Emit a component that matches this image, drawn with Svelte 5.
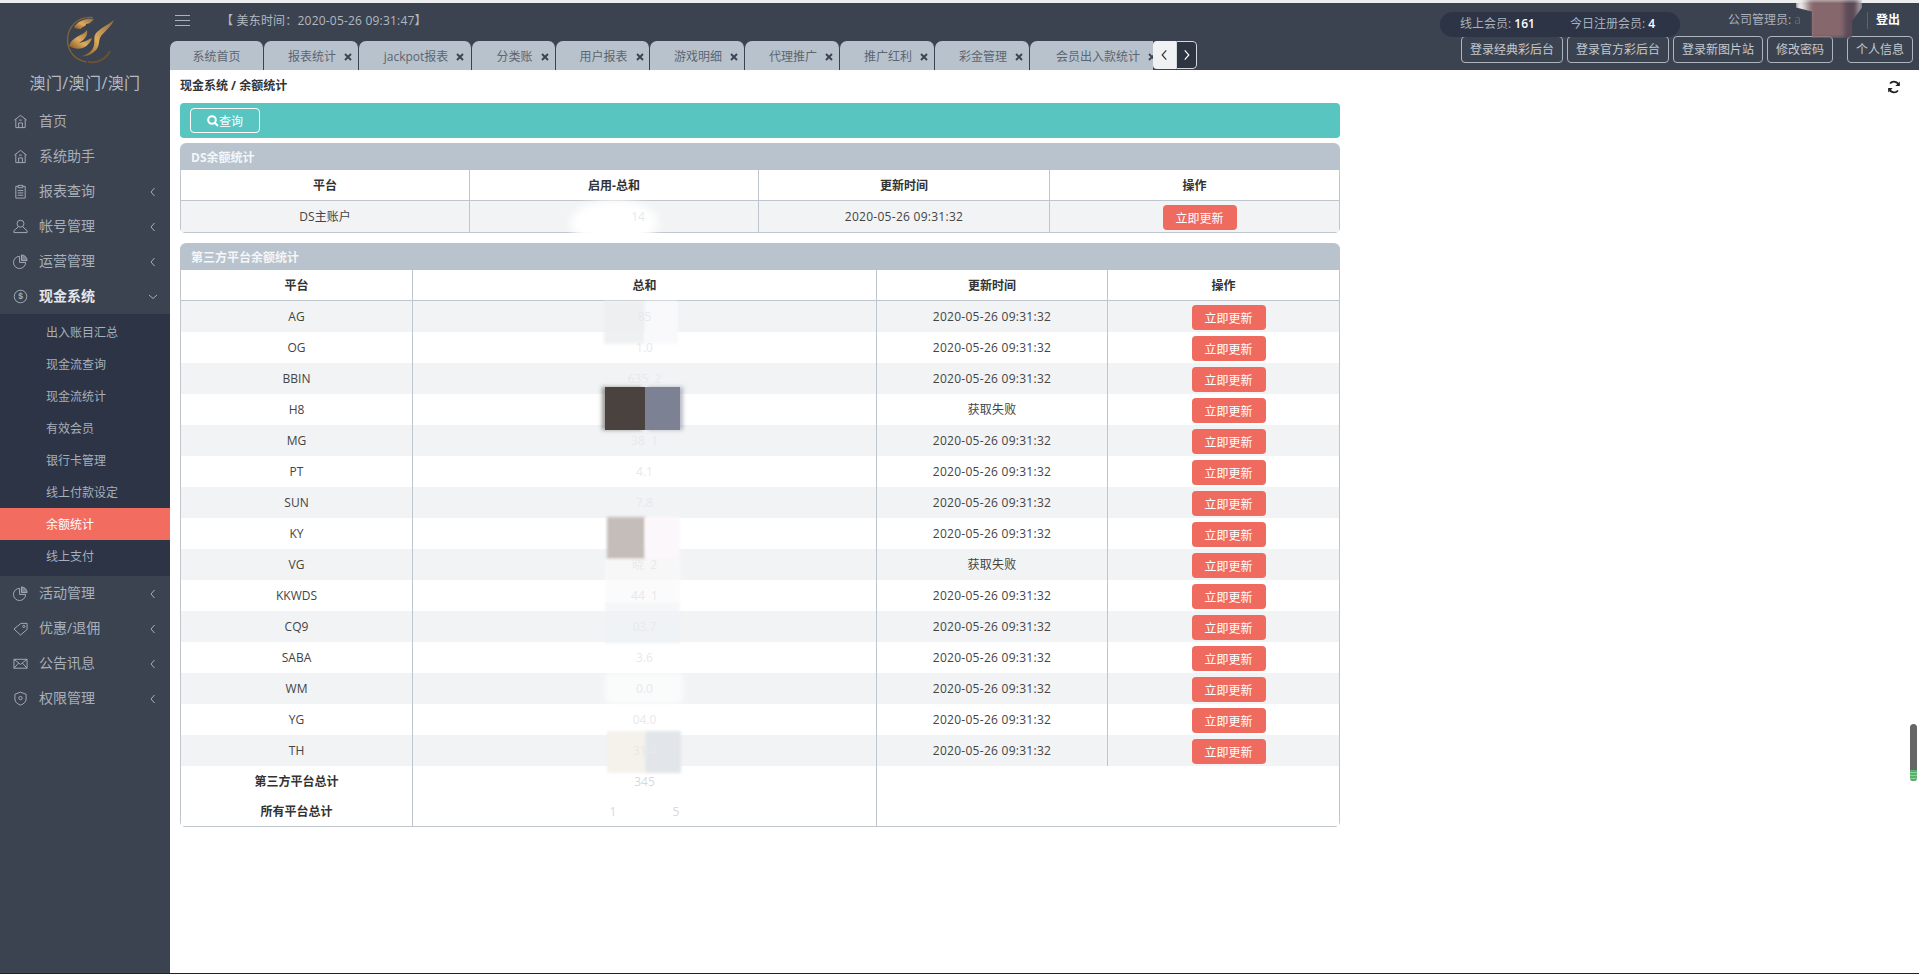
<script>
  const menuTop = [
    { t: '首页', i: 'home' },
    { t: '系统助手', i: 'home' },
    { t: '报表查询', i: 'clip', c: 1 },
    { t: '帐号管理', i: 'user', c: 1 },
    { t: '运营管理', i: 'pie', c: 1 }
  ];
  const sub = ['出入账目汇总', '现金流查询', '现金流统计', '有效会员', '银行卡管理', '线上付款设定', '余额统计', '线上支付'];
  const menuBottom = [
    { t: '活动管理', i: 'pie', c: 1 },
    { t: '优惠/退佣', i: 'tag', c: 1 },
    { t: '公告讯息', i: 'mail', c: 1 },
    { t: '权限管理', i: 'shield', c: 1 }
  ];
  const tabs = [
    { t: '系统首页', w: 94 }, { t: '报表统计', w: 95, x: 1 }, { t: 'jackpot报表', w: 113, x: 1 }, { t: '分类账', w: 84, x: 1 },
    { t: '用户报表', w: 94, x: 1 }, { t: '游戏明细', w: 95, x: 1 }, { t: '代理推广', w: 95, x: 1 }, { t: '推广红利', w: 95, x: 1 },
    { t: '彩金管理', w: 95, x: 1 }, { t: '会员出入款统计', w: 135, x: 1 }
  ];
  const T = '2020-05-26 09:31:32';
  const rows = [
    ['AG', '85', T], ['OG', '1.0', T], ['BBIN', '635  2', T], ['H8', '', '获取失败'], ['MG', '38  1', T],
    ['PT', '4.1', T], ['SUN', '7.8', T], ['KY', '', T], ['VG', '晓  2', '获取失败'], ['KKWDS', '44  1', T],
    ['CQ9', '03.7', T], ['SABA', '3.6', T], ['WM', '0.0', T], ['YG', '04.0', T], ['TH', '31.4', T]
  ];
  const links = ['登录经典彩后台', '登录官方彩后台', '登录新图片站', '修改密码'];
</script>

{#snippet icon(n)}
  <svg class="ico" viewBox="0 0 16 16" fill="none" stroke="currentColor" stroke-width="1">
    {#if n === 'home'}
      <path d="M1.5 6.5 8 1.5l6.500 5M3 5.500V14.500h10V5.500M6 14.500v-5h4v5M6.500 6.500h3" />
    {:else if n === 'clip'}
      <path d="M5.500 2.500H3v12.500h10V2.500h-2.500M5.500 1.500h5v2.500h-5zM5 7h6M5 9.500h6M5 12h6" />
    {:else if n === 'user'}
      <circle cx="8" cy="5" r="3.700" /><path d="M5.500 8.500 1 12.500v2h14v-2l-4.500-4" />
    {:else if n === 'pie'}
      <path d="M7 2.500a6.500 6.500 0 1 0 6.500 6.500H7z" /><path d="M9 1h.3A6 6 0 0 1 15 7H9z" fill="currentColor" fill-opacity=".55" />
    {:else if n === 'dollar'}
      <circle cx="8" cy="8" r="6.700" /><text x="8" y="11" text-anchor="middle" class="dl" fill="currentColor" stroke="none">$</text>
    {:else if n === 'tag'}
      <path d="M1 8.500 8.500 2.500H15v6.500L8 15z" /><circle cx="11.500" cy="5.800" r="1.200" />
    {:else if n === 'mail'}
      <path d="M1 3.500h14v9.500H1zM1 3.500l7 5.500 7-5.500M1 13l5-5.500M15 13l-5-5.500" />
    {:else}
      <path d="M8 1.200 14 3.500v5c0 3.500-3 5.500-6 6.500-3-1-6-3-6-6.500v-5z" /><circle cx="8" cy="7.500" r="1.800" />
    {/if}
  </svg>
{/snippet}

{#snippet left()}
  <svg class="chev" viewBox="0 0 6 10" fill="none" stroke="currentColor"><path d="M4.500 1 1 5l3.500 4" /></svg>
{/snippet}

{#snippet item(m)}
  <div class="mi">
    {@render icon(m.i)}
    <span class="mt">{m.t}</span>
    {#if m.c}{@render left()}{/if}
  </div>
{/snippet}

<div class="page">
  <div class="strip"></div>
  <div class="frame">
    <aside>
      <div class="brand">
        <svg class="logo" viewBox="0 0 50 48">
          <defs>
            <linearGradient id="g" x1="0" y1="1" x2="1" y2="0">
              <stop offset="0" stop-color="#7a5424" /><stop offset=".45" stop-color="#e0ab5d" /><stop offset="1" stop-color="#8d6a3d" />
            </linearGradient>
          </defs>
          <path d="M27 1.500C12 0 1 11 1.500 25c.5 11 8 19 19 21" fill="none" stroke="#8a6434" stroke-width="1.200" />
          <path d="M22 46c9 2 18-3 22-11" fill="none" stroke="#6d5230" stroke-width="1.800" />
          <path d="M8 11c5-7 13-9 20-8-2 2-4 5-8 5 0 3-4 2-5 5-3 0-5 0-7-2z" fill="url(#g)" />
          <path d="M3 30C6 20 17 20 21 14c1 6-2 9-8 13 6-1 8-3 13-5-2 7-11 15-23 8z" fill="url(#g)" />
          <path d="M16 40c6-2 11-5 12-11 1-5-1-9 3-13 5-5 11-7 17-12-3 7-9 11-13 16-3 5-1 10-5 14-4 4-9 7-14 6z" fill="url(#g)" />
        </svg>
        <div class="bname">澳门/澳门/澳门</div>
      </div>
      {#each menuTop as m}{@render item(m)}{/each}
      <div class="mi open">
        {@render icon('dollar')}
        <span class="mt">现金系统</span>
        <svg class="chev down" viewBox="0 0 10 6" fill="none" stroke="currentColor"><path d="m1 1 4 3.500L9 1" /></svg>
      </div>
      <div class="submenu">
        {#each sub as s}
          <div class="si" class:on={s === '余额统计'}>{s}</div>
        {/each}
      </div>
      {#each menuBottom as m}{@render item(m)}{/each}
    </aside>

    <div class="col">
      <header>
        <div class="hleft">
          <div class="hrow">
            <svg class="burger" viewBox="0 0 15 12" stroke="#aab1bb" stroke-width="1"><path d="M0 .5h15M0 5.500h15M0 10.500h15" /></svg>
            <span class="clock">【 美东时间：2020-05-26 09:31:47】</span>
          </div>
          <div class="tabline">
            <div class="tabs">
              {#each tabs as t}
                <div class="tab" class:closable={t.x} style="flex-basis:{t.w}px">
                  <span>{t.t}</span>
                  {#if t.x}
                    <svg class="x" viewBox="0 0 8 8" stroke="#3c4350" stroke-width="1.900"><path d="m1 1 6 6M7 1 1 7" /></svg>
                  {/if}
                </div>
              {/each}
            </div>
            <div class="nav">
              <div class="nl"><svg viewBox="0 0 6 10" fill="none" stroke="#333"><path d="M4.500 1 1 5l3.500 4" /></svg></div>
              <div class="nr"><svg viewBox="0 0 6 10" fill="none" stroke="#fff"><path d="m1.500 1 3.500 4-3.500 4" /></svg></div>
            </div>
          </div>
        </div>
        <div class="hright">
          <div class="info">
            <div class="pill">
              <span>线上会员: <b>161</b></span>
              <span>今日注册会员: <b>4</b></span>
            </div>
            <div class="who">
              <span class="adm">公司管理员: <i>a</i></span>
              <span class="smear"></span>
              <span class="sep"></span>
              <span class="out">登出</span>
            </div>
          </div>
          <div class="links">
            {#each links as l}<span class="lnk">{l}</span>{/each}
            <span class="lnk me">个人信息</span>
          </div>
        </div>
      </header>

      <main>
        <div class="crumb">
          <span>现金系统 / 余额统计</span>
          <svg class="sync" viewBox="0 0 14 14" fill="none" stroke="#222" stroke-width="1.800">
            <path d="M12 5.500A5.200 5.200 0 0 0 3 3.500M2 8.500a5.200 5.200 0 0 0 9 2" />
            <path d="M12.800 1.500v4.500H8.300zM1.200 12.500V8h4.500z" fill="#222" stroke="none" />
          </svg>
        </div>

        <div class="wrap">
          <div class="query">
            <span class="qbtn">
              <svg viewBox="0 0 12 12" fill="none" stroke="#fff" stroke-width="2"><circle cx="5" cy="5" r="3.800" /><path d="m8 8 3 3" /></svg><span class="qt">查询</span>
            </span>
          </div>

          <section class="panel first">
            <h3>DS余额统计</h3>
            <table class="four">
              <thead><tr><th>平台</th><th>启用-总和</th><th>更新时间</th><th>操作</th></tr></thead>
              <tbody>
                <tr>
                  <td>DS主账户</td>
                  <td class="sum"><span class="faint dsv">14</span></td>
                  <td class="date">{T}</td>
                  <td><span class="upd">立即更新</span></td>
                </tr>
              </tbody>
            </table>
            <span class="blot ds"></span>
          </section>

          <section class="panel">
            <h3>第三方平台余额统计</h3>
            <table class="third">
              <thead><tr><th>平台</th><th>总和</th><th>更新时间</th><th>操作</th></tr></thead>
              <tbody>
                {#each rows as r}
                  <tr>
                    <td>{r[0]}</td>
                    <td class="sum"><span class="faint">{r[1]}</span></td>
                    <td class="date">{r[2]}</td>
                    <td><span class="upd">立即更新</span></td>
                  </tr>
                {/each}
                <tr class="tot">
                  <td>第三方平台总计</td>
                  <td class="sum"><span class="faint dark">345</span></td>
                  <td colspan="2"></td>
                </tr>
                <tr class="tot">
                  <td>所有平台总计</td>
                  <td class="sum"><span class="faint dark">1 &nbsp; &nbsp; &nbsp; &nbsp; &nbsp; &nbsp; &nbsp; &nbsp; &nbsp;5</span></td>
                  <td colspan="2"></td>
                </tr>
              </tbody>
            </table>
            <span class="blot a1"></span><span class="blot a2"></span>
            <span class="blot b1"></span><span class="blot b2"></span>
            <span class="blot c1"></span><span class="blot c2"></span>
            <span class="blot d"></span><span class="blot e"></span>
            <span class="blot f1"></span><span class="blot f2"></span>
            <span class="blot g"></span>
          </section>
        </div>
      </main>
    </div>
  </div>
  <div class="edge"></div>
  <div class="gauge"><span></span></div>
</div>

<style>
  :global(body) { margin: 0; background: #fff; }
  .page {
    position: relative; width: 1919px; height: 974px; display: flex; flex-direction: column; overflow: hidden;
    font: 12px/1.2 "Open Sans", "Noto Sans CJK SC", sans-serif; color: #444;
  }
  .strip { height: 3px; background: #eceef0; flex: none; }
  .edge { height: 1px; background: #222; flex: none; }
  .frame { flex: 1; display: flex; min-height: 0; }
  aside { width: 170px; flex: none; background: #3c4350; color: #a7afba; }
  .brand { height: 101px; display: flex; flex-direction: column; align-items: center; }
  .logo { width: 50px; height: 48px; margin: 13px 0 0 11px; }
  .bname { font-size: 16px; letter-spacing: .4px; margin-top: 8px; color: #b4bbc5; line-height: 22px; }
  .mi { height: 35px; display: flex; align-items: center; padding-left: 13px; font-size: 14px; }
  .ico { width: 15px; height: 15px; flex: none; margin-right: 11px; color: #a7afba; }
  .dl { font: bold 9px "Liberation Sans", sans-serif; }
  .mt { flex: 1; }
  .chev { width: 6px; height: 10px; margin-right: 14px; color: #a7afba; }
  .chev.down { width: 10px; height: 6px; margin-right: 12px; }
  .open .mt { color: #e3e6ea; font-weight: 700; }
  .submenu { background: #2c3445; padding: 2px 0 4px; }
  .si { height: 32px; line-height: 34px; padding-left: 46px; color: #a7afba; }
  .si.on { background: #f26c5f; color: #fff; }

  .col { flex: 1; min-width: 0; display: flex; flex-direction: column; }
  header { height: 67px; background: #3c4350; display: flex; flex: none; }
  .hleft { width: 1027px; flex: none; display: flex; flex-direction: column; }
  .hrow { height: 38px; display: flex; align-items: center; padding-left: 5px; }
  .burger { width: 15px; height: 12px; margin-top: -2px; }
  .clock { margin-left: 31px; margin-top: -2px; color: #b1b8c2; letter-spacing: .2px; }
  .tabline { height: 29px; display: flex; }
  .tabs { width: 983px; display: flex; overflow: hidden; flex: none; }
  .tab {
    flex: 0 0 auto; box-sizing: border-box; height: 29px; background: #b8c2cc; color: #5d6570;
    border-right: 1px solid #3c4350; border-radius: 7px 7px 0 0; padding-top: 3px;
    display: flex; align-items: center; justify-content: center; gap: 8px; white-space: nowrap;
  }
  .tab.closable { padding-left: 18px; }
  .x { width: 8px; height: 8px; flex: none; }
  .nav { width: 44px; display: flex; height: 28px; border-radius: 4px; overflow: hidden; flex: none; }
  .nl, .nr { display: flex; align-items: center; justify-content: center; }
  .nl { width: 23px; background: #f0f1f2; }
  .nr { width: 21px; background: #2e3542; border: 1px solid #d5d8dc; border-radius: 0 4px 4px 0; box-sizing: border-box; }
  .nav svg { width: 7px; height: 12px; }

  .hright { flex: 1; display: flex; flex-direction: column; margin-left: 243px; }
  .info { height: 33px; display: flex; }
  .pill {
    width: 240px; height: 25px; margin-top: 9px; background: #2c3445; border-radius: 13px; flex: none; z-index: 1;
    display: flex; align-items: center; gap: 35px; padding-left: 20px; box-sizing: border-box; color: #a9b1bc;
  }
  .pill b { color: #fff; font-weight: 600; }
  .who { flex: 1; display: flex; align-items: flex-start; padding-top: 10px; margin-left: 48px; color: #a9b1bc; position: relative; }
  .adm i { font-style: normal; opacity: .35; }
  .sep { position: absolute; left: 139px; top: 9px; height: 17px; border-left: 1px solid #5b6270; }
  .out { position: absolute; left: 148px; top: 10px; color: #fff; font-weight: 600; }
  .smear {
    position: absolute; left: 68px; top: -3px; width: 66px; height: 38px; filter: blur(2px);
    background: linear-gradient(90deg, #f1eeee 0 8%, #86686c 24% 70%, #5b4a57 76% 90%, #d9d5d6 100%);
    clip-path: polygon(0 0, 100% 0, 100% 20%, 85% 55%, 85% 100%, 24% 100%, 24% 30%, 0 20%);
  }
  .links { display: flex; padding-left: 21px; gap: 4px; height: 27px; }
  .lnk {
    box-sizing: border-box; height: 27px; line-height: 25px; padding: 0 8px; border: 1px solid #aeb5be; border-radius: 4px;
    color: #c3c9d0; white-space: nowrap;
  }
  .lnk.me { margin-left: 10px; }

  main { flex: 1; padding: 0 10px; background: #fff; }
  .crumb { height: 33px; display: flex; align-items: center; justify-content: space-between; color: #333; font-weight: 700; padding-right: 8px; }
  .sync { width: 14px; height: 14px; }
  .wrap { width: 1160px; }
  .query { height: 35px; background: #59c5c1; border-radius: 4px; padding: 5px 10px; box-sizing: border-box; }
  .qbtn {
    box-sizing: border-box; width: 70px; height: 25px; border: 1px solid #fff; border-radius: 4px; color: #fff;
    display: flex; align-items: center; justify-content: center;
  }
  .qt { padding-top: 3px; }
  .qbtn svg { width: 12px; height: 12px; }
  .panel { position: relative; margin-top: 10px; }
  .panel.first { margin-top: 5px; }
  h3 {
    margin: 0; height: 27px; line-height: 29px; padding-left: 11px; background: #b8c3cd; border-radius: 6px 6px 0 0;
    color: #f4f6f8; font-size: 12px; font-weight: 700;
  }
  table {
    width: 100%; table-layout: fixed; border-collapse: separate; border-spacing: 0;
    border: solid #bfc5cc; border-width: 0 1px 1px 1px; border-radius: 0 0 5px 5px; box-sizing: border-box;
  }
  th {
    box-sizing: border-box; height: 31px; padding: 2px 0 0; border-bottom: 1px solid #bfc5cc; border-left: 1px solid #bfc5cc;
    color: #333; font-weight: 700; text-align: center; background: #fff;
  }
  td { height: 31px; padding: 2px 0 0; border-left: 1px solid #bfc5cc; text-align: center; color: #444; box-sizing: border-box; }
  th:first-child, td:first-child { border-left: 0; }
  tbody tr:nth-child(odd) td { background: #f1f3f5; }
  .date { letter-spacing: .27px; }
  .four th:nth-child(1) { width: 288px; }
  .four th:nth-child(2) { width: 289px; }
  .four th:nth-child(3) { width: 291px; }
  .third th:nth-child(1) { width: 231px; }
  .third th:nth-child(2) { width: 464px; }
  .third th:nth-child(3) { width: 231px; }
  tr.tot td { height: 30px; background: #fff !important; font-weight: 700; color: #333; }
  tr.tot td[colspan] { border-left: 1px solid #bfc5cc; }
  .faint { color: #e7e9ec; font-weight: 400; white-space: pre; position: relative; z-index: 1; }
  .faint.dark { color: #d8dadd; }
  .dsv { padding-left: 48px; }
  .upd {
    display: inline-block; margin-left: 10px; width: 74px; height: 25px; line-height: 28px; border-radius: 4px;
    background: #ef6b5f; color: #fff; vertical-align: middle;
  }

  .blot { position: absolute; pointer-events: none; filter: blur(1.500px); }
  .ds { left: 390px; top: 57px; width: 88px; height: 46px; background: #fff; border-radius: 50%; filter: blur(5px); }
  .a1 { left: 424px; top: 58px; width: 41px; height: 43px; background: #eeeff0; opacity: .9; }
  .a2 { left: 465px; top: 58px; width: 33px; height: 43px; background: #f9f9fb; }
  .b1 { left: 425px; top: 144px; width: 40px; height: 43px; background: #49423f; filter: none; box-shadow: -3px 0 4px #49423f88; }
  .b2 { left: 465px; top: 144px; width: 35px; height: 43px; background: #7d8194; filter: none; box-shadow: 3px 0 4px #7d819488; }
  .c1 { left: 427px; top: 274px; width: 38px; height: 42px; background: #c5bdba; }
  .c2 { left: 465px; top: 274px; width: 35px; height: 42px; background: #fbf7fb; }
  .d { left: 425px; top: 316px; width: 75px; height: 43px; background: #fafafa; opacity: .7; }
  .e { left: 425px; top: 359px; width: 75px; height: 42px; background: #f0f3f6; opacity: .7; }
  .f1 { left: 427px; top: 488px; width: 38px; height: 42px; background: #f4f2eb; }
  .f2 { left: 465px; top: 488px; width: 36px; height: 42px; background: #e2e6ea; }
  .g { left: 425px; top: 430px; width: 78px; height: 31px; background: #fdfdfd; opacity: .8; filter: blur(3px); }

  .gauge {
    position: absolute; left: 1910px; top: 724px; width: 7px; height: 57px; background: #666; border-radius: 4px; overflow: hidden;
  }
  .gauge span {
    position: absolute; left: 0; right: 0; bottom: 0; height: 11px;
    background: repeating-linear-gradient(0deg, #58b06a 0 2px, #8ad29a 2px 3px);
  }
</style>
